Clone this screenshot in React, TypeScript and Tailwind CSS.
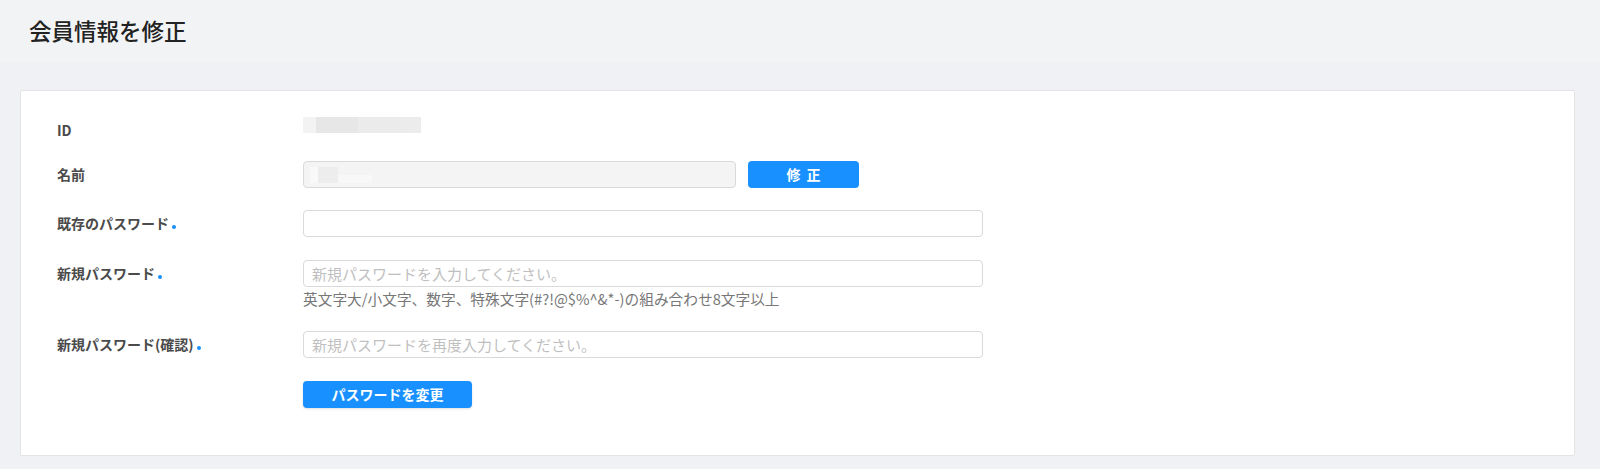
import React from 'react';

const Dot = () => (
 <span className="inline-block w-[4px] h-[4px] rounded-full bg-[#1890ff] ml-[3px] translate-y-[3px]" />
);

const Row = ({label, required, children, className}: {label: string; required?: boolean; children: React.ReactNode; className?: string}) => (
 <div className={'flex items-start ' + (className || '')}>
  <div className="w-[246px] shrink-0 h-[27px] flex items-center text-[14px] font-bold text-[#4a4a4a]">
   {label}
   {required && <Dot />}
  </div>
  <div className="flex-1">{children}</div>
 </div>
);

const App = () => {
 return (
  <div className="min-h-screen bg-[#f0f1f5] font-['Noto_Sans_CJK_JP','Noto_Sans',sans-serif]">
   {/* header */}
   <div className="h-[62px] bg-[#f2f3f5] flex items-center px-[29px]">
    <h1 className="text-[22.5px] font-medium text-[#222]">会員情報を修正</h1>
   </div>

   <div className="pt-[28px] pl-[20px] pr-[25px] pb-[13px]">
    <div className="bg-white border border-[#e4e4e4] rounded-[2px] h-[366px] pl-[36px] pt-[26px]">
     {/* ID */}
     <Row label="ID">
      <div className="flex h-[16px]">
       <div className="w-[13px] h-full bg-[#f3f3f3]" />
       <div className="w-[42px] h-full bg-[#e7e7e7]" />
       <div className="w-[43px] h-full bg-[#ebebeb]" />
       <div className="w-[20px] h-full bg-[#ececec]" />
      </div>
     </Row>

     {/* name */}
     <Row label="名前" className="mt-[17px]">
      <div className="flex items-center gap-[12px]">
       <div className="w-[433px] h-[27px] rounded-[4px] border border-[#d9d9d9] bg-[#f4f4f4] flex items-center pl-[6px]">
        <div className="w-[8px] h-[16px] bg-[#f9f9f9]" />
        <div className="w-[20px] h-[16px] bg-[#ededed]" />
        <div className="w-[34px] h-[8px] mt-[8px] bg-[#f8f8f8]" />
       </div>
       <button className="w-[111px] h-[27px] rounded-[4px] bg-[#1890ff] text-white text-[14px] font-bold tracking-[6px] pl-[6px]">
        修正
       </button>
      </div>
     </Row>

     {/* current password */}
     <Row label="既存のパスワード" required className="mt-[22px]">
      <input
       type="password"
       className="w-[680px] h-[27px] rounded-[4px] border border-[#d9d9d9] px-[8px] text-[15px] outline-none"
      />
     </Row>

     {/* new password */}
     <Row label="新規パスワード" required className="mt-[23px]">
      <input
       type="password"
       placeholder="新規パスワードを入力してください。"
       className="w-[680px] h-[27px] rounded-[4px] border border-[#d9d9d9] px-[8px] text-[15px] outline-none placeholder:text-[#bfbfbf]"
      />
      <p className="text-[14.7px] leading-[20px] mt-[2px] text-[#777]">
       英文字大/小文字、数字、特殊文字(#?!@$%^&*-)の組み合わせ8文字以上
      </p>
     </Row>

     {/* confirm */}
     <Row label="新規パスワード(確認)" required className="mt-[22px]">
      <input
       type="password"
       placeholder="新規パスワードを再度入力してください。"
       className="w-[680px] h-[27px] rounded-[4px] border border-[#d9d9d9] px-[8px] text-[15px] outline-none placeholder:text-[#bfbfbf]"
      />
     </Row>

     <Row label="" className="mt-[23px]">
      <button className="w-[169px] h-[27px] rounded-[4px] bg-[#1890ff] text-white text-[14px] font-bold shadow-sm">
       パスワードを変更
      </button>
     </Row>
    </div>
   </div>
  </div>
 );
};

export default App;
